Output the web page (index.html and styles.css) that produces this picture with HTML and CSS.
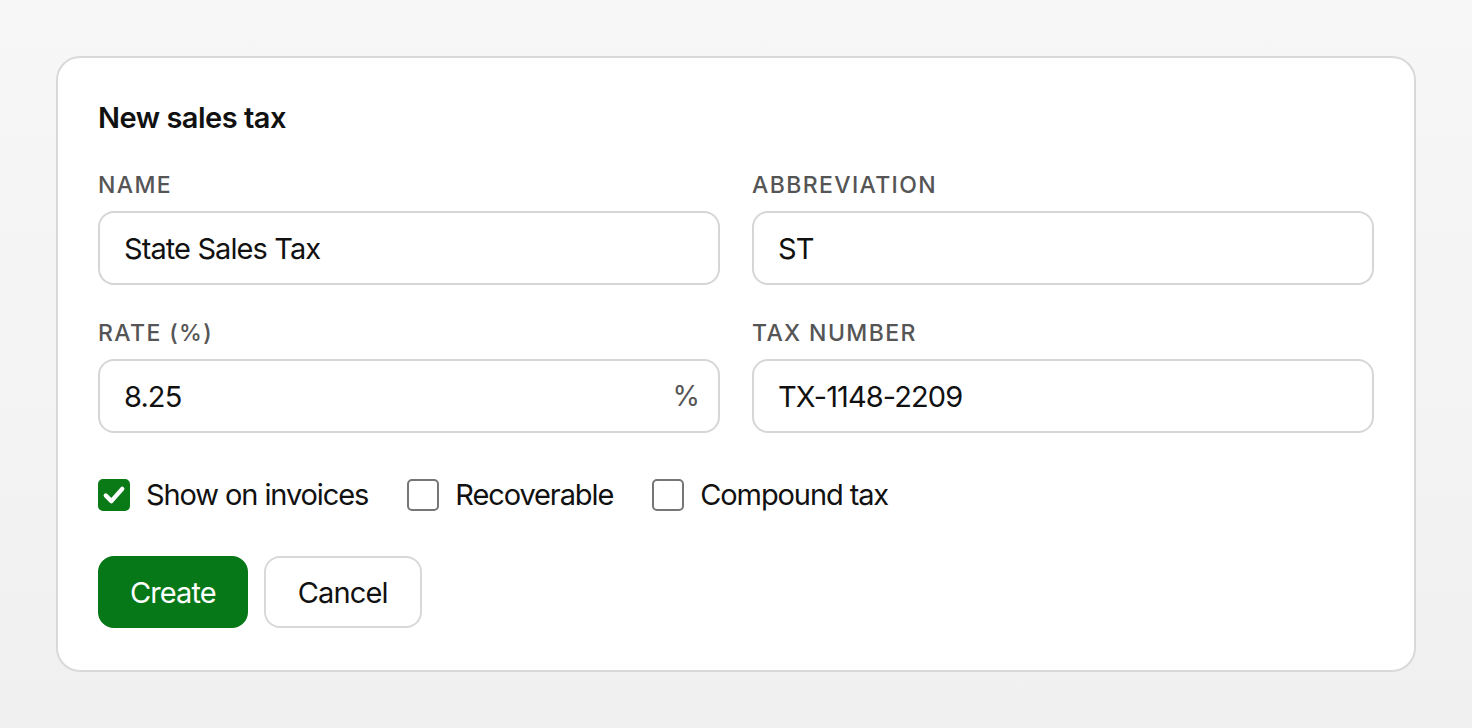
FILE: index.html
```html
<!DOCTYPE html>
<html lang="en">
<head>
<meta charset="utf-8">
<title>New sales tax</title>
<link rel="stylesheet" href="styles.css">
</head>
<body>
<main class="page">
  <section class="card">
    <h1 class="title">New sales tax</h1>
    <div class="grid">
      <div class="field">
        <label class="label" for="name">NAME</label>
        <div class="control"><input id="name" class="input" type="text" value="State Sales Tax"></div>
      </div>
      <div class="field">
        <label class="label" for="abbr">ABBREVIATION</label>
        <div class="control"><input id="abbr" class="input" type="text" value="ST"></div>
      </div>
      <div class="field">
        <label class="label" for="rate">RATE (%)</label>
        <div class="control control-suffix"><input id="rate" class="input" type="text" value="8.25"><span class="suffix">%</span></div>
      </div>
      <div class="field">
        <label class="label" for="taxno">TAX NUMBER</label>
        <div class="control"><input id="taxno" class="input" type="text" value="TX-1148-2209"></div>
      </div>
    </div>
    <div class="checks">
      <label class="check">
        <span class="box checked"><svg viewBox="0 0 16 16" width="30" height="30"><path d="M3.3 8.3 L6.5 11.5 L12.7 4.5" fill="none" stroke="#fff" stroke-width="2.5" stroke-linecap="round" stroke-linejoin="round"/></svg></span>
        <span class="check-text">Show on invoices</span>
      </label>
      <label class="check">
        <span class="box"></span>
        <span class="check-text">Recoverable</span>
      </label>
      <label class="check">
        <span class="box"></span>
        <span class="check-text">Compound tax</span>
      </label>
    </div>
    <div class="actions">
      <button class="btn btn-primary" type="button">Create</button>
      <button class="btn btn-secondary" type="button">Cancel</button>
    </div>
  </section>
</main>
</body>
</html>
```
FILE: styles.css
```css
* { box-sizing: border-box; }
html, body { margin: 0; padding: 0; }
body {
  width: 1472px;
  height: 728px;
  background: linear-gradient(180deg, #f7f7f7 0%, #eff0ef 100%);
  font-family: Inter, "Noto Sans", "Liberation Sans", sans-serif;
  color: #111;
}
.page {
  padding: 56px 56px 0 56px;
}
.card {
  width: 1360px;
  background: #fff;
  border: 2px solid #d9d9d9;
  border-radius: 24px;
  padding: 42px 40px 42px 40px;
}
.title {
  margin: 0 0 33px 0;
  font-size: 29px;
  line-height: 36px;
  font-weight: 600;
  letter-spacing: -0.5px;
  color: #111;
}
.grid {
  display: grid;
  grid-template-columns: 1fr 1fr;
  column-gap: 32px;
  row-gap: 32px;
}
.field {
  display: flex;
  flex-direction: column;
}
.label {
  font-size: 23px;
  line-height: 32px;
  font-weight: 500;
  letter-spacing: 0.06em;
  color: #555;
  margin-bottom: 10px;
}
.control {
  display: flex;
  align-items: center;
  height: 74px;
  border: 2px solid #d6d6d6;
  border-radius: 16px;
  padding: 0 21px 0 24px;
  background: #fff;
}
.control-suffix {
  padding-right: 18px;
}
.input {
  flex: 1;
  min-width: 0;
  border: 0;
  outline: none;
  padding: 0;
  margin: 0;
  background: transparent;
  font-family: inherit;
  font-size: 29px;
  letter-spacing: -0.9px;
  color: #111;
}
.suffix {
  font-size: 28px;
  color: #555;
}
.checks {
  display: flex;
  align-items: center;
  gap: 39px;
  margin-top: 44px;
}
.check {
  display: flex;
  align-items: center;
  gap: 16px;
  font-size: 29px;
  line-height: 36px;
  letter-spacing: -1.1px;
  color: #111;
}
.box {
  width: 32px;
  height: 32px;
  border: 2px solid #767676;
  border-radius: 5px;
  background: #fff;
  display: flex;
  align-items: center;
  justify-content: center;
}
.box.checked {
  background: #0a7a17;
  border-color: #0a7a17;
}
.actions {
  display: flex;
  gap: 16px;
  margin-top: 43px;
}
.btn {
  height: 72px;
  padding: 0 32px;
  border-radius: 16px;
  border: 2px solid #d9d9d9;
  font-family: inherit;
  font-size: 29px;
  letter-spacing: -0.9px;
  background: #fff;
  color: #111;
}
.btn-primary {
  padding: 0 30px;
  background: #077818;
  border-color: #077818;
  color: #fff;
}
```
